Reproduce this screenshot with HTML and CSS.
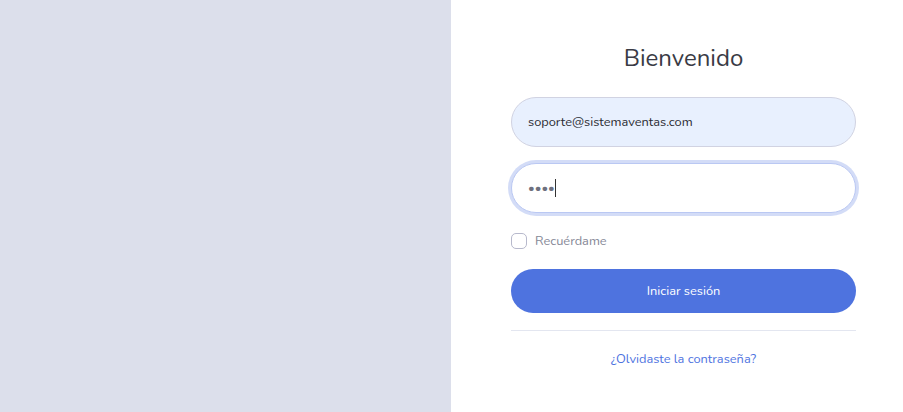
FILE: index.html
```html
<!DOCTYPE html>
<html lang="es">
<head>
<meta charset="utf-8">
<title>Login</title>
<link rel="stylesheet" href="styles.css">
</head>
<body>
<div class="page">
  <div class="side-image"></div>
  <div class="panel">
    <h1 class="title">Bienvenido</h1>
    <form class="form">
      <input class="field field-autofill" type="email" value="soporte@sistemaventas.com">
      <div class="field-wrap">
        <input class="field field-focus" type="password" value="1234">
        <span class="caret"></span>
      </div>
      <label class="remember">
        <span class="check"></span>
        <span class="remember-text">Recuérdame</span>
      </label>
      <button class="btn" type="button">Iniciar sesión</button>
    </form>
    <hr class="divider">
    <div class="forgot"><a href="#">¿Olvidaste la contraseña?</a></div>
  </div>
</div>
</body>
</html>
```
FILE: styles.css
```css
* { box-sizing: border-box; }
html, body { margin: 0; padding: 0; }
body {
  width: 903px;
  height: 412px;
  overflow: hidden;
  background: #fff;
  font-family: "Nunito", "Lato", "Open Sans", sans-serif;
  color: #858796;
}
.page {
  display: flex;
  height: 412px;
}
.side-image {
  width: 451px;
  flex: none;
  background: #dcdfeb;
}
.panel {
  flex: 1;
  padding: 44px 47px 0 60px;
}
.title {
  margin: 0 0 24px;
  text-align: center;
  font-size: 24px;
  font-weight: 400;
  line-height: 29px;
  color: #3a3b45;
}
.form {
  display: flex;
  flex-direction: column;
}
.field {
  display: block;
  width: 100%;
  height: 50px;
  border: 1px solid #d1d3e2;
  border-radius: 25px;
  padding: 0 16px;
  font-family: inherit;
  font-size: 12.8px;
  color: #2b2c33;
  outline: none;
  margin: 0 0 16px;
}
.field-autofill {
  background: #e8f0fe;
}
.field-wrap {
  position: relative;
}
.field-focus {
  background: #fff;
  border-color: #bac8f3;
  box-shadow: 0 0 0 3px rgba(78, 115, 223, 0.25);
  color: #6e707e;
}
.caret {
  position: absolute;
  left: 44px;
  top: 16px;
  width: 1px;
  height: 18px;
  background: #333;
}
.remember {
  display: flex;
  align-items: center;
  gap: 8px;
  height: 20px;
  margin: 2px 0 18px;
  font-size: 12.8px;
  color: #858796;
}
.check {
  width: 16px;
  height: 16px;
  border: 1px solid #b7b9cc;
  border-radius: 5px;
  background: #fff;
}
.btn {
  height: 44px;
  border: none;
  border-radius: 22px;
  background: #4e73df;
  color: #fff;
  font-family: inherit;
  font-size: 12.8px;
}
.divider {
  margin: 17px 0 0;
  border: 0;
  border-top: 1px solid #e3e6f0;
}
.forgot {
  margin-top: 19px;
  text-align: center;
  font-size: 12.8px;
}
.forgot a {
  color: #4e73df;
  text-decoration: none;
}
```
